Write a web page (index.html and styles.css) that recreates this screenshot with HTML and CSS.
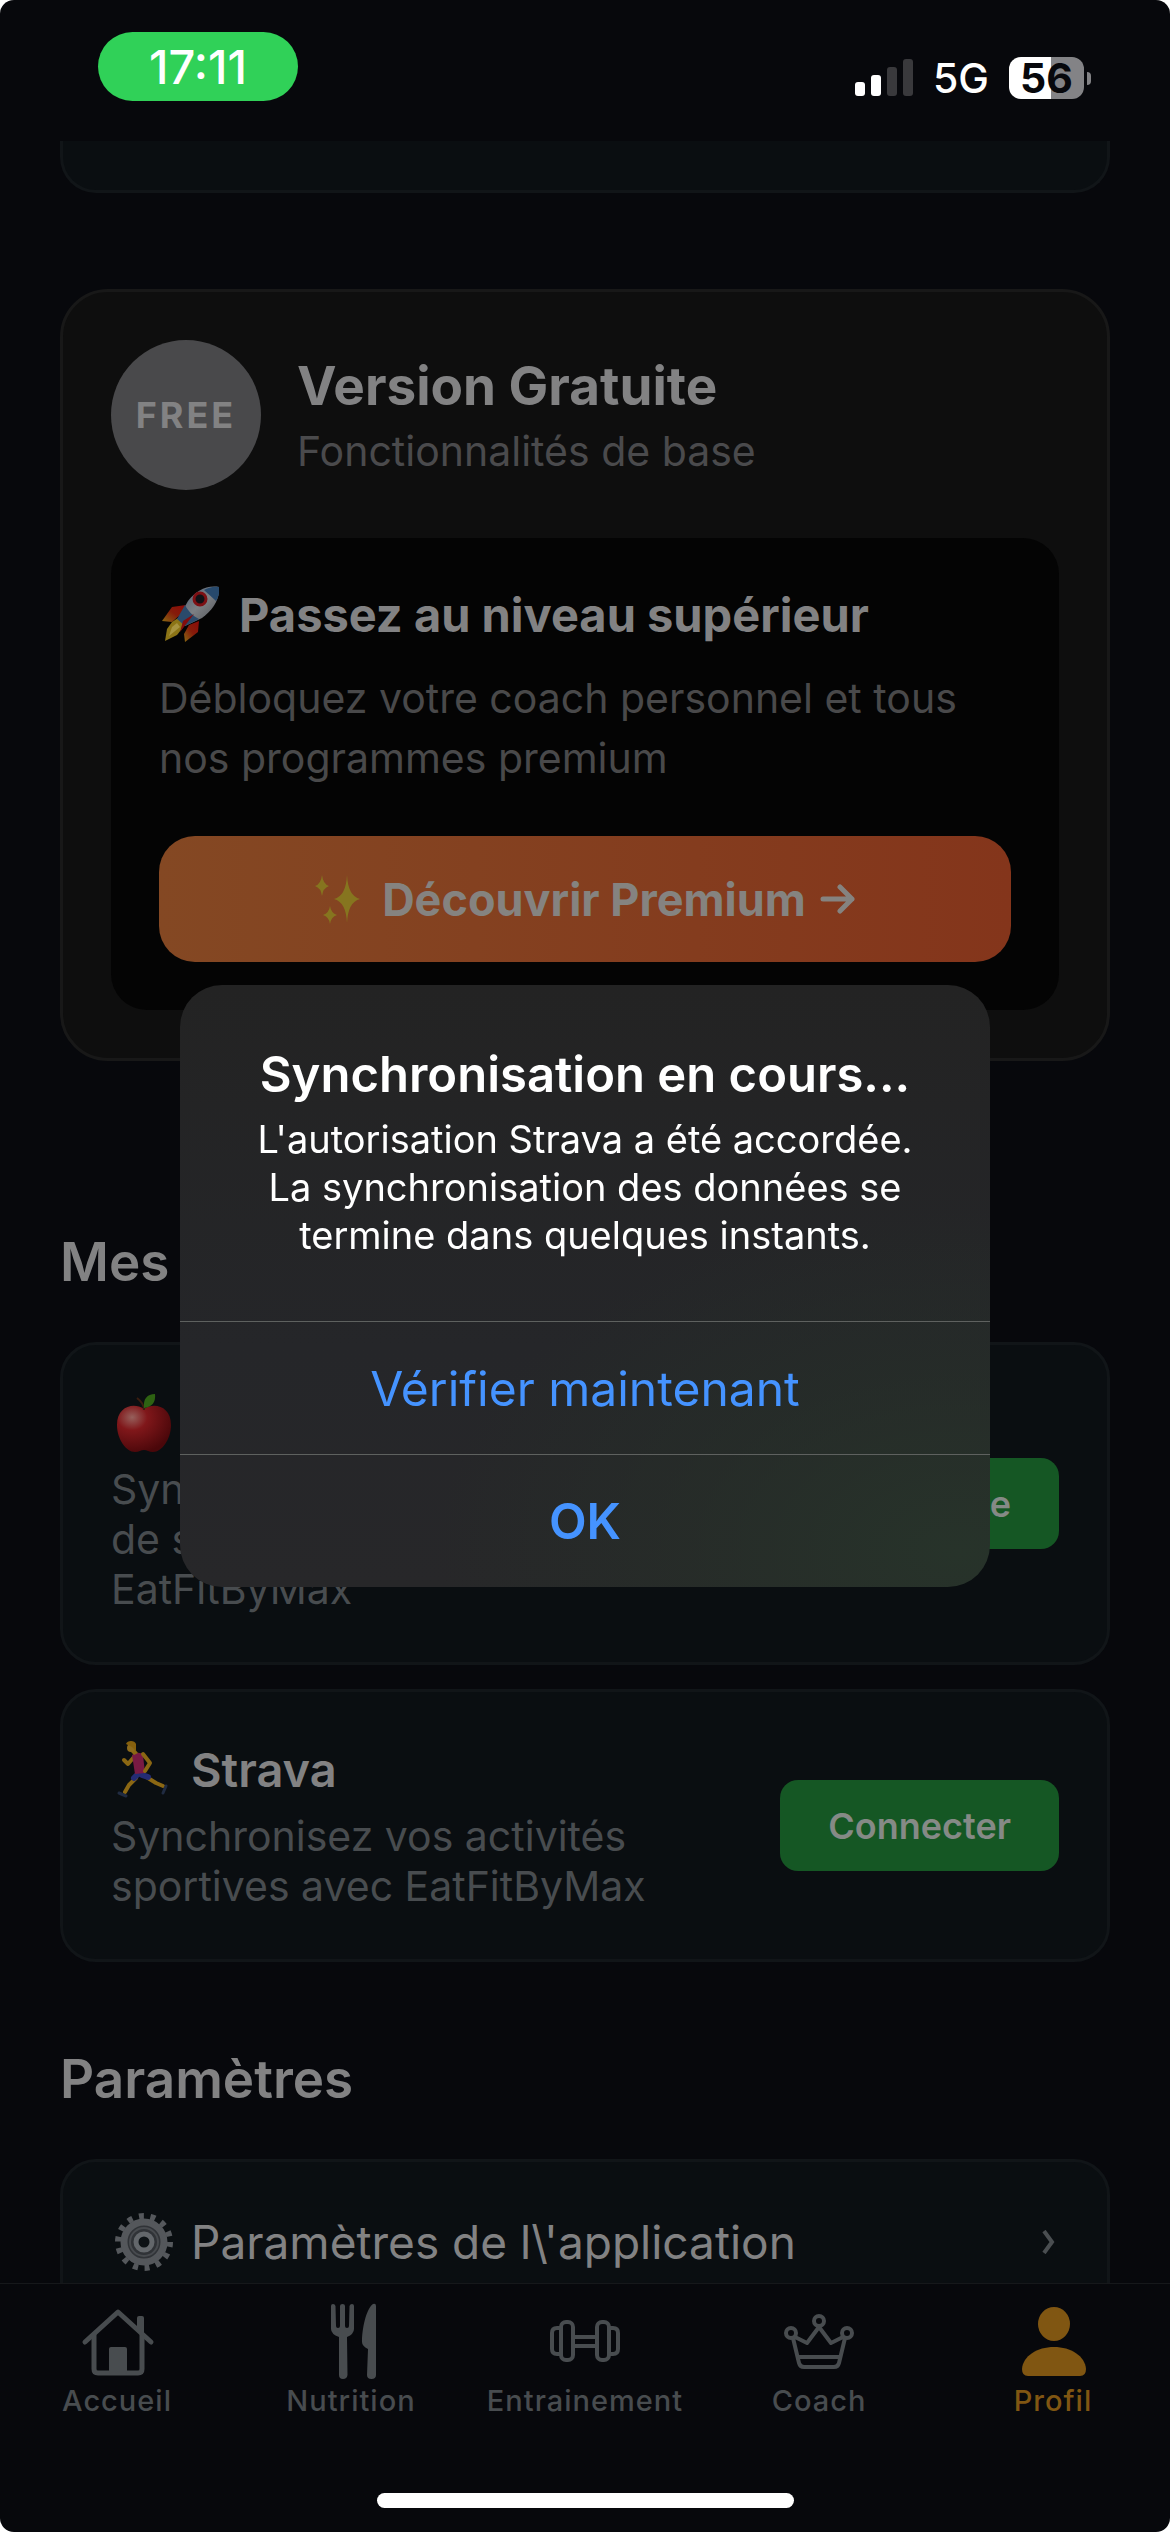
FILE: index.html
```html
<!DOCTYPE html>
<html lang="fr">
<head>
<meta charset="utf-8">
<meta name="viewport" content="width=device-width, initial-scale=1">
<title>Profil</title>
<link rel="stylesheet" href="styles.css">
</head>
<body>
<div class="screen">
  <header class="status">
    <div class="status-time">17:11</div>
    <div class="status-right">
      <svg class="signal" viewBox="0 0 58 38" aria-hidden="true">
        <rect x="0" y="23" width="10" height="14" rx="3" fill="#fff"/>
        <rect x="16" y="16" width="10" height="21" rx="3" fill="#fff"/>
        <rect x="32" y="8" width="10" height="29" rx="3" fill="#39393c"/>
        <rect x="48" y="0" width="10" height="37" rx="3" fill="#39393c"/>
      </svg>
      <span class="network">5G</span>
      <span class="battery"><span class="battery-level">56</span><span class="battery-nub"></span></span>
    </div>
  </header>

  <main class="content">
    <div class="card card-tail"></div>

    <section class="card premium">
      <div class="plan">
        <div class="plan-badge">FREE</div>
        <div class="plan-text">
          <h2 class="plan-name">Version Gratuite</h2>
          <p class="plan-note">Fonctionnalités de base</p>
        </div>
      </div>
      <div class="upsell">
        <h3 class="upsell-title">
          <svg class="emoji" viewBox="0 0 60 60" aria-hidden="true">
            <defs>
              <linearGradient id="hull" x1="0" y1="0" x2="1" y2="1"><stop offset="0" stop-color="#3f5570"/><stop offset=".5" stop-color="#7d8084"/><stop offset="1" stop-color="#4b4e52"/></linearGradient>
              <linearGradient id="fin" x1="1" y1="0" x2="0" y2="1"><stop offset="0" stop-color="#8a0a08"/><stop offset=".5" stop-color="#851c0a"/><stop offset="1" stop-color="#8a6a12"/></linearGradient>
            </defs>
            <path d="M27 20 13 22 3 36 13 37 21 30Z" fill="url(#fin)"/>
            <path d="M40 36 39 47 26 57 25 49 30 40Z" fill="url(#fin)"/>
            <path d="M19 33 26 40 18 50 6 56 8 44 13 37Z" fill="#8c7416"/>
            <path d="M18 38 21 42 10 51 13 42Z" fill="#a89440"/>
            <path d="M60 2C47 0 37 6 29 16L19 34 26 41 43 33C54 25 61 14 60 2Z" fill="url(#hull)"/>
            <path d="M60 2C54 1 49 3 45 5L57 16C60 11 61 6 60 2Z" fill="#27496c"/>
            <path d="M26 20 18 34 26 41 40 34C34 31 29 26 26 20Z" fill="#2b4a6b"/>
            <path d="M35 29 21 47 24 36Z" fill="#830d0e"/>
            <circle cx="41" cy="14" r="6" fill="#101116" stroke="#7d1014" stroke-width="3"/>
          </svg>
          <span>Passez au niveau supérieur</span>
        </h3>
        <p class="upsell-copy">Débloquez votre coach personnel et tous nos programmes premium</p>
        <button class="upsell-button" type="button">
          <svg class="sparkles" viewBox="0 0 52 50" aria-hidden="true">
            <g fill="#86751f"><path d="M33 1Q34 22 46 25Q34 28 33 49Q32 28 20 25Q32 22 33 1Z"/><path d="M8 1Q9 10 15 12Q9 14 8 22Q7 14 1 12Q7 10 8 1Z"/><path d="M16 32Q17 39 23 41Q17 43 16 50Q15 43 9 41Q15 39 16 32Z"/></g>
          </svg>
          <span>Découvrir Premium</span>
          <svg class="arrow" viewBox="0 0 36 30" aria-hidden="true"><path d="M3 15H32M20 3 32 15 20 27" fill="none" stroke="currentColor" stroke-width="5" stroke-linecap="round" stroke-linejoin="round"/></svg>
        </button>
      </div>
    </section>

    <section class="group group-apps">
      <h2 class="group-title">Mes</h2>
      <article class="card app">
        <div class="app-text">
          <h3 class="app-name">
            <svg class="emoji" viewBox="0 0 60 60" aria-hidden="true">
              <defs><radialGradient id="apple" cx=".28" cy=".25" r=".8"><stop offset="0" stop-color="#96605c"/><stop offset=".35" stop-color="#80171a"/><stop offset="1" stop-color="#4a070a"/></radialGradient></defs>
              <path d="M30 16C20 9 3 13 3 32C3 46 12 59 21 59C25 59 27 57 30 57S35 59 39 59C48 59 57 46 57 32C57 13 40 9 30 16Z" fill="url(#apple)"/>
              <path d="M30 17C30 12 27 8 23 5" fill="none" stroke="#3b1d10" stroke-width="2"/>
              <path d="M30 15C29 6 33 1 41 1C42 9 38 14 30 15Z" fill="#2e6212"/>
            </svg>
            <span>Santé</span>
          </h3>
          <p class="app-copy">Synchro<br>de santé<br>EatFitByMax</p>
        </div>
        <button class="app-button" type="button">Disponible</button>
      </article>
      <article class="card app">
        <div class="app-text">
          <h3 class="app-name">
            <svg class="emoji" viewBox="0 0 60 60" aria-hidden="true">
              <g fill="none" stroke-linecap="round" stroke-linejoin="round">
                <path d="M20 17 14 24 10 20" stroke="#8b6713" stroke-width="4"/>
                <path d="M22 38 15 45 11 52" stroke="#8b6713" stroke-width="4"/>
                <path d="M34 38 42 43 49 46" stroke="#8b6713" stroke-width="4"/>
                <path d="M23 35 20 38M28 35 34 37" stroke="#242c73" stroke-width="6"/>
                <path d="M5 53 12 56M52 46 49 53" stroke="#202b41" stroke-width="3"/>
              </g>
              <path d="M18 15C22 12 27 12 29 15L31 33 21 34Z" fill="#781a43"/>
              <path d="M29 14 36 23 31 31" fill="none" stroke="#8b6713" stroke-width="4" stroke-linecap="round" stroke-linejoin="round"/>
              <path d="M20 8 24 13 20 15 17 12Z" fill="#8b6713"/>
              <circle cx="17" cy="8" r="4" fill="#8d6b1c"/>
              <path d="M12 4C13 0 21 0 22 4L22 11 18 7Z" fill="#86600d"/>
            </svg>
            <span>Strava</span>
          </h3>
          <p class="app-copy">Synchronisez vos activités sportives avec EatFitByMax</p>
        </div>
        <button class="app-button" type="button">Connecter</button>
      </article>
    </section>

    <section class="group group-settings">
      <h2 class="group-title">Paramètres</h2>
      <a class="card setting" href="#parametres">
        <svg class="emoji" viewBox="0 0 60 60" aria-hidden="true">
          <circle cx="30" cy="30" r="26" fill="none" stroke="#55585c" stroke-width="6" stroke-dasharray="5 6.66"/>
          <circle cx="30" cy="30" r="20" fill="#303337" stroke="#54575b" stroke-width="7"/>
          <circle cx="30" cy="30" r="14" fill="none" stroke="#484b4f" stroke-width="2"/>
          <circle cx="30" cy="30" r="8" fill="#0d1215" stroke="#63676b" stroke-width="5"/>
        </svg>
        <span class="setting-label">Paramètres de l\'application</span>
        <svg class="chevron" viewBox="0 0 14 24" aria-hidden="true"><path d="M2 1 10 12 2 23" fill="none" stroke="currentColor" stroke-width="4"/></svg>
      </a>
    </section>
  </main>

  <nav class="tabs">
    <a class="tab" href="#accueil">
      <svg class="tab-icon" viewBox="0 0 76 76" aria-hidden="true">
        <g fill="none" stroke="currentColor" stroke-width="5" stroke-linecap="round" stroke-linejoin="round"><path d="M6 39 39 9 72 39"/><path d="M15 32V66Q15 70 19 70H59Q63 70 63 66V32"/></g>
        <path d="M58 15Q58 13 60 13H63Q65 13 65 15V34L58 27Z" fill="currentColor"/><rect x="30" y="44" width="18" height="27" rx="2" fill="currentColor"/>
      </svg>
      <span>Accueil</span>
    </a>
    <a class="tab" href="#nutrition">
      <svg class="tab-icon" viewBox="0 0 76 76" aria-hidden="true">
        <path d="M18 3Q18 1 20 1T22.500 3L23 23Q23 25 25 25T27 23V3Q27 1 29.500 1T32 3V23Q32 25 34 25T36 23L36.500 3Q37 1 39 1T41 3V26Q41 31 34 34L34.500 72Q34 76 30 76T26 72V34Q18 31 18 26Z" fill="currentColor"/>
        <path d="M63 3V72Q63 76 58.500 76T54 72L55 46Q49 43 49 39C49 26 53 6 60 1Q63 0 63 3Z" fill="currentColor"/>
      </svg>
      <span>Nutrition</span>
    </a>
    <a class="tab" href="#entrainement">
      <svg class="tab-icon" viewBox="0 0 76 76" aria-hidden="true">
        <g fill="none" stroke="currentColor" stroke-width="4"><rect x="14" y="19" width="12" height="38" rx="5"/><rect x="50" y="19" width="12" height="38" rx="5"/><path d="M26 34H50M26 43H50M14 25H10Q5 25 5 30V46Q5 51 10 51H14M62 25H66Q71 25 71 30V46Q71 51 66 51H62"/></g>
      </svg>
      <span>Entrainement</span>
    </a>
    <a class="tab" href="#coach">
      <svg class="tab-icon" viewBox="0 0 76 76" aria-hidden="true">
        <g fill="none" stroke="currentColor" stroke-width="4" stroke-linejoin="round"><circle cx="38" cy="18" r="5"/><circle cx="10" cy="30" r="5"/><circle cx="66" cy="30" r="5"/><path d="M12 35 18 60Q19 64 23 64H53Q57 64 58 60L64 35M14 34 26 40 38 24 50 40 62 34M17 54H59"/></g>
      </svg>
      <span>Coach</span>
    </a>
    <a class="tab tab-active" href="#profil" aria-current="page">
      <svg class="tab-icon" viewBox="0 0 76 76" aria-hidden="true">
        <g fill="currentColor"><ellipse cx="39" cy="21" rx="16" ry="17"/><path d="M7 66C8 53 22 44 39 44S70 53 71 66Q71 73 65 73H13Q7 73 7 66Z"/></g>
      </svg>
      <span>Profil</span>
    </a>
    <div class="home-indicator"></div>
  </nav>
</div>

<div class="overlay">
  <div class="dialog" role="alertdialog" aria-modal="true" aria-labelledby="dialog-title" aria-describedby="dialog-message">
    <div class="dialog-body">
      <h1 class="dialog-title" id="dialog-title">Synchronisation en cours...</h1>
      <p class="dialog-message" id="dialog-message">L'autorisation Strava a été accordée. La synchronisation des données se termine dans quelques instants.</p>
    </div>
    <button class="dialog-button" type="button">Vérifier maintenant</button>
    <button class="dialog-button dialog-button-strong" type="button">OK</button>
  </div>
</div>
</body>
</html>
```

FILE: styles.css
```css
* { box-sizing: border-box; }

html { background: #fff; }

body {
  margin: 0;
  font-family: Inter, "Liberation Sans", sans-serif;
  font-size: 41px;
  color: #828283;
}

h1, h2, h3, p { margin: 0; }
button { border: 0; font: inherit; cursor: pointer; }
a { color: inherit; text-decoration: none; }
svg { flex: none; }

.screen {
  display: flex;
  flex-direction: column;
  height: 100vh;
  border-radius: 14px;
  background: #07080c;
  overflow: hidden;
}

/* status bar */
.status {
  display: flex;
  flex: none;
  justify-content: space-between;
  align-items: flex-start;
  height: 141px;
  padding: 32px 79px 0 98px;
  color: #fff;
}
.status-time {
  width: 200px;
  border-radius: 35px;
  background: #30d158;
  font-size: 47px;
  font-weight: 500;
  line-height: 69px;
  text-align: center;
}
.status-right {
  display: flex;
  align-items: center;
  gap: 20px;
  padding-top: 25px;
}
.signal { width: 58px; height: 38px; }
.network { font-size: 41px; font-weight: 500; line-height: 42px; }
.battery { display: flex; align-items: center; gap: 3px; }
.battery-level {
  width: 75px;
  border-radius: 12px;
  background: linear-gradient(90deg, #fff 56%, #838386 56%);
  color: #07080c;
  font-size: 41px;
  font-weight: 700;
  line-height: 42px;
  text-align: center;
}
.battery-nub { width: 4px; height: 13px; border-radius: 0 4px 4px 0; background: #838386; }

/* page content */
.content { flex: 1; min-height: 0; padding: 0 60px; overflow: hidden; }

.card {
  border: 3px solid #111518;
  border-radius: 36px;
  background: #0a0e11;
}
.card-tail {
  height: 52px;
  border-top: 0;
  border-radius: 0 0 36px 36px;
}

.premium {
  margin-top: 96px;
  padding: 48px;
  border-color: #181818;
  border-radius: 48px;
  background: #0e0e0e;
}
.plan { display: flex; align-items: center; gap: 36px; }
.plan-badge {
  flex: none;
  width: 150px;
  border-radius: 50%;
  background: #49494b;
  font-size: 36px;
  font-weight: 700;
  line-height: 150px;
  letter-spacing: 3px;
  text-align: center;
}
.plan-text { display: flex; flex-direction: column; gap: 8px; }
.plan-name { font-size: 53px; font-weight: 700; line-height: 64px; }
.plan-note { color: #4a4a4c; line-height: 50px; }

.upsell {
  margin-top: 48px;
  padding: 48px;
  border-radius: 36px;
  background: #040404;
}
.upsell-title {
  display: flex;
  align-items: center;
  gap: 20px;
  font-size: 47px;
  font-weight: 700;
  line-height: 58px;
}
.emoji { width: 60px; height: 60px; margin: -1px 0; }
.upsell-copy { margin-top: 24px; color: #49494a; line-height: 60px; }
.upsell-button {
  display: flex;
  justify-content: center;
  align-items: center;
  width: 100%;
  height: 126px;
  margin-top: 48px;
  padding: 0;
  border-radius: 36px;
  background: linear-gradient(90deg, #844823, #84351b);
  color: #858380;
  font-size: 45px;
  font-weight: 700;
}
.sparkles { width: 52px; height: 50px; margin-right: 16px; }
.arrow { width: 36px; height: 30px; margin-left: 14px; }

/* grouped cards */
.group { display: flex; flex-direction: column; gap: 24px; }
.group-apps { margin-top: 169px; }
.group-settings { margin-top: 85px; }
.group-title { margin-bottom: 24px; font-size: 53px; font-weight: 600; line-height: 64px; }

.app {
  display: flex;
  justify-content: space-between;
  align-items: center;
  gap: 48px;
  padding: 48px;
}
.app-text { max-width: 560px; }
.app-name {
  display: flex;
  align-items: center;
  gap: 17px;
  padding-left: 3px;
  font-size: 47px;
  font-weight: 600;
  line-height: 59px;
}
.app-copy { margin-top: 12px; color: #484c4f; line-height: 50px; }
.app-button {
  flex: none;
  height: 91px;
  padding: 0 48px;
  border-radius: 18px;
  background: #155724;
  color: #858a86;
  font-size: 36px;
  font-weight: 600;
}

.setting {
  display: flex;
  align-items: center;
  gap: 17px;
  padding: 48px 51px;
  font-size: 46px;
  line-height: 64px;
}
.setting-label { flex: 1; }
.chevron { width: 14px; height: 24px; color: #4a4e51; }

/* tab bar */
.tabs {
  display: grid;
  flex: none;
  grid-template-columns: repeat(5, 1fr);
  padding: 19px 0 24px;
  border-top: 1px solid #16181b;
  color: #484c4f;
}
.tab {
  display: flex;
  flex-direction: column;
  align-items: center;
  gap: 4px;
  font-size: 29px;
  font-weight: 500;
  line-height: 36px;
  letter-spacing: 1px;
}
.tab-active { color: #805612; }
.tab-icon { width: 76px; height: 76px; }
.home-indicator {
  grid-column: 1 / -1;
  justify-self: center;
  width: 417px;
  height: 15px;
  margin-top: 74px;
  border-radius: 8px;
  background: #fff;
}

/* alert */
.overlay {
  position: fixed;
  inset: 0;
  display: grid;
  place-items: center;
  padding-top: 40px;
}
.dialog {
  width: 810px;
  max-width: 90%;
  border-radius: 42px;
  background:
    radial-gradient(ellipse 520px 340px at 96% 94%, #27332a 0%, #26302880 55%, #24262500 100%),
    linear-gradient(180deg, #232323, #252629 60%, #272729);
  overflow: hidden;
  text-align: center;
}
.dialog-body {
  display: flex;
  flex-direction: column;
  gap: 10px;
  padding: 60px 66px 62px;
  color: #fff;
}
.dialog-title { font-size: 49px; font-weight: 600; line-height: 60px; }
.dialog-message { font-size: 38px; line-height: 48px; }
.dialog-button {
  display: block;
  width: 100%;
  height: 133px;
  border-top: 1px solid #5e615f;
  background: none;
  color: #4593ff;
  font-size: 48px;
}
.dialog-button-strong { font-size: 49px; font-weight: 600; }
```
